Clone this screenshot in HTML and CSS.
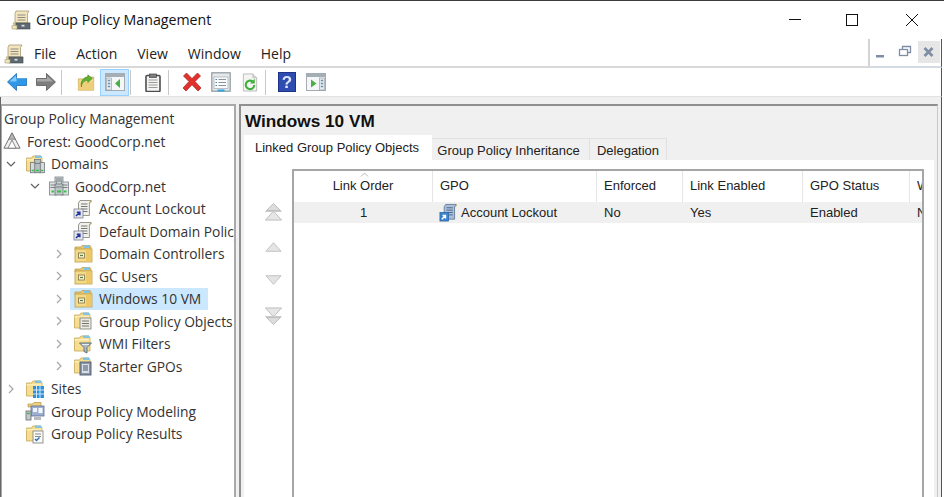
FILE: index.html
```html
<!DOCTYPE html>
<html lang="en">
<head>
<meta charset="utf-8">
<title>Group Policy Management</title>
<link rel="stylesheet" href="styles.css">
</head>
<body>
<svg class="defs" width="0" height="0" aria-hidden="true">
  <defs>
    <symbol id="i-scroll" viewBox="0 0 20 20">
      <path d="M5 1h13l-1.500 2.500V13H4V3.500z" fill="#f3e6bf" stroke="#a69a73" stroke-width=".8"/>
      <path d="M6.500 5h8M6.500 7.500h8M6.500 10h8" stroke="#8d8a80" stroke-width="1"/>
      <path d="M2 13h17l-1 2H3z" fill="#e8d9a8" stroke="#a69a73" stroke-width=".6"/>
      <rect x="5" y="13" width="14" height="6" fill="#5d6870" stroke="#3f474d" stroke-width=".6"/>
      <rect x="10.500" y="14.800" width="3" height="1.800" fill="#d6d9db"/>
      <path d="M1 15.500h5v3.500H1z" fill="#f0e3ba" stroke="#a69a73" stroke-width=".6"/>
    </symbol>
    <symbol id="i-gpo" viewBox="0 0 20 20">
      <path d="M7 1.500h11l-1.600 2.500v12.500H5.500V4z" fill="#f1f1ec" stroke="#8f8f87" stroke-width=".9"/>
      <path d="M8 5h6.500M8 7.500h6.500M8 10h6.500M10 12.500h4.500" stroke="#777" stroke-width="1"/>
      <path d="M18 1l1 1.500-2 2z" fill="#d1a44a"/>
      <rect x="1" y="10" width="9" height="9" fill="#e4e6ec" stroke="#7d818c" stroke-width=".8"/>
      <path d="M3 17l3-3M3.800 13.200h3v3" fill="none" stroke="#23379e" stroke-width="1.600"/>
    </symbol>
    <symbol id="i-gpo-blue" viewBox="0 0 20 20">
      <path d="M7 1.500h11l-1.600 2.500v13H5.500V4z" fill="#a9bfda" stroke="#5d7696" stroke-width=".9"/>
      <path d="M8 5h6.500M8 7.500h6.500M8 10h6.500M10 12.500h4.500" stroke="#4b6585" stroke-width="1"/>
      <path d="M18 1l1 1.500-2 2z" fill="#d1a44a"/>
      <rect x="1" y="10" width="9" height="9" fill="#3c86cf" stroke="#2a62a0" stroke-width=".8"/>
      <path d="M3 17l3-3M3.800 13.200h3v3" fill="none" stroke="#fff" stroke-width="1.500"/>
    </symbol>
    <symbol id="i-ou" viewBox="0 0 20 20">
      <path d="M2 3h6l1-1.500h8l1 1.500v3H2z" fill="#e8c568" stroke="#b99a47" stroke-width=".7"/>
      <rect x="11" y="1.500" width="6" height="2.500" fill="#7fc4e8"/>
      <rect x="2" y="5" width="17" height="13" fill="#f4d987" stroke="#bc9c4a" stroke-width=".8"/>
      <rect x="13" y="5.500" width="5.500" height="12" fill="#ecc869"/>
      <rect x="5.500" y="9" width="6" height="5" fill="#fbf2cf" stroke="#7d7346" stroke-width=".8"/>
      <path d="M7 11.500h3" stroke="#4f7c3f" stroke-width="1.200"/>
    </symbol>
    <symbol id="i-folder" viewBox="0 0 20 20">
      <path d="M1.500 4h5l1.500-2h8l1 2v13h-15.500z" fill="#f6dd90" stroke="#c5a754" stroke-width=".8"/>
      <rect x="10" y="1.500" width="6" height="2.500" fill="#7fc4e8"/>
      <path d="M1.500 5h15v1.500h-15z" fill="#fcedb8"/>
    </symbol>
    <symbol id="i-forest" viewBox="0 0 20 20">
      <path d="M10 1L1 18h18z" fill="#f1f1f1" stroke="#6f6f6f" stroke-width="1.100"/>
      <path d="M10 9l-4.500 9h9z" fill="#fff" stroke="#7a7a7a" stroke-width="1"/>
      <path d="M10 1L6.500 8h7z" fill="#b9b9b9" stroke="#6f6f6f" stroke-width=".8"/>
    </symbol>
    <symbol id="i-servers" viewBox="0 0 20 20">
      <rect x="6" y="1" width="8" height="8" fill="#ccd2d4" stroke="#7d8486" stroke-width=".8"/>
      <rect x=".5" y="6" width="7" height="13" fill="#dde1e2" stroke="#7d8486" stroke-width=".8"/>
      <rect x="12.500" y="6" width="7" height="13" fill="#dde1e2" stroke="#7d8486" stroke-width=".8"/>
      <rect x="6" y="8" width="8" height="11" fill="#bfc6c8" stroke="#6e7577" stroke-width=".8"/>
      <path d="M1.500 9h5M13.500 9h5M7 3h6M7 5h6M1.500 11.500h5M13.500 11.500h5M7 11h6" stroke="#6f7678" stroke-width=".9"/>
      <path d="M8 15.500h4M2.500 15.500h2.500M15 15.500h2.500" stroke="#35c04a" stroke-width="1.800"/>
    </symbol>
    <symbol id="i-domains" viewBox="0 0 20 20">
      <use href="#i-folder"/>
      <g transform="translate(5.500 5.500) scale(.78)">
        <rect x="5" y="0" width="8" height="6" fill="#b7bec0" stroke="#6e7577"/>
        <rect x="0" y="4" width="6" height="13" fill="#d5dadb" stroke="#6e7577"/>
        <rect x="12" y="4" width="6" height="13" fill="#d5dadb" stroke="#6e7577"/>
        <rect x="5.500" y="5" width="7" height="12" fill="#b7bec0" stroke="#6e7577"/>
        <path d="M1.500 14h3M13.500 14h3M7 14h4" stroke="#35c04a" stroke-width="2"/>
      </g>
    </symbol>
    <symbol id="i-gpos" viewBox="0 0 20 20">
      <use href="#i-folder"/>
      <rect x="7" y="7" width="11" height="11" fill="#eceae2" stroke="#8b8a82" stroke-width=".9"/>
      <path d="M9 10h7M9 12.500h7M9 15h7" stroke="#77766e" stroke-width="1"/>
    </symbol>
    <symbol id="i-filter" viewBox="0 0 20 20">
      <use href="#i-folder"/>
      <path d="M6.500 9h12l-4.500 4.500V19l-3-1.500v-4z" fill="#aebac2" stroke="#5f6c75" stroke-width=".9"/>
      <path d="M9 10.500h7" stroke="#e6ecef" stroke-width="1"/>
    </symbol>
    <symbol id="i-starter" viewBox="0 0 20 20">
      <use href="#i-folder"/>
      <rect x="7" y="6" width="11" height="13" fill="#8a98a8" stroke="#4e5866" stroke-width=".9"/>
      <rect x="9" y="8" width="7" height="9" fill="#d8dee5"/>
      <path d="M10 10h5M10 12h5M10 14h5" stroke="#47586e" stroke-width="1"/>
    </symbol>
    <symbol id="i-sites" viewBox="0 0 20 20">
      <use href="#i-folder"/>
      <rect x="8" y="7" width="11" height="12" fill="#2f8fd8"/>
      <path d="M11.500 7v12M15 7v12M8 11h11M8 15h11" stroke="#cfe8fa" stroke-width="1"/>
    </symbol>
    <symbol id="i-modeling" viewBox="0 0 20 20">
      <path d="M3 3h5l1-1.500h7V6H3z" fill="#f0d27c" stroke="#b3953f" stroke-width=".7"/>
      <rect x="6" y="5" width="13" height="10" fill="#9db0d4" stroke="#5d6c92" stroke-width=".8"/>
      <rect x="8" y="7" width="4" height="4" fill="#f0f5fb"/>
      <rect x="13.500" y="7" width="4" height="5" fill="#f4f7fb"/>
      <rect x="1" y="10" width="5" height="9" fill="#c4c9cc" stroke="#65696c" stroke-width=".8"/>
      <path d="M2 12.500h3" stroke="#35c04a" stroke-width="1.500"/>
      <path d="M9 16h7v3H9z" fill="#b8bcbf"/>
    </symbol>
    <symbol id="i-results" viewBox="0 0 20 20">
      <use href="#i-folder"/>
      <rect x="8" y="7" width="10" height="12" fill="#fafafa" stroke="#8a8a8a" stroke-width=".9"/>
      <path d="M10 10h6M10 12.500h6" stroke="#8a8a8a" stroke-width="1"/>
      <path d="M10 15l1.500 1.500 3-3" fill="none" stroke="#2b6fba" stroke-width="1.500"/>
    </symbol>
    <symbol id="i-back" viewBox="0 0 20 18">
      <path d="M9.500 .5L.5 9l9 8.500V12.500h10v-7h-10z" fill="#2f97e8" stroke="#1e6fb5" stroke-width=".8"/>
      <path d="M9 2.500L2.500 8.500h7V6h9.500V5.500H9z" fill="#84c9f8"/>
    </symbol>
    <symbol id="i-fwd" viewBox="0 0 20 18">
      <path d="M10.500 .5l9 8.500-9 8.500V12.500H.5v-7h10z" fill="#7d7d7d" stroke="#5b5b5b" stroke-width=".8"/>
      <path d="M1 6h10V3l6 5.500H1z" fill="#a8a8a8"/>
    </symbol>
    <symbol id="i-up" viewBox="0 0 20 20">
      <path d="M1.500 6h7l1-2h9v14.500h-17z" fill="#f4dc92" stroke="#c0a04c" stroke-width=".8"/>
      <path d="M1.500 9h17v9.500h-17z" fill="#edcf7a"/>
      <path d="M5 15c0-5 3-7 7-7.500V10l5-4.500L12 1.500V4C7 4.500 3.500 8.500 5 15z" fill="#5fb332" stroke="#3a7f1c" stroke-width=".6"/>
    </symbol>
    <symbol id="i-panel-left" viewBox="0 0 20 18">
      <rect x=".5" y=".5" width="19" height="17" fill="#f4f6f7" stroke="#a3acb1"/>
      <rect x=".5" y=".5" width="19" height="3.500" fill="#a3aeb5"/>
      <rect x="1.500" y="5" width="5" height="12" fill="#e6ebee" stroke="#8f9aa1" stroke-width=".6"/>
      <path d="M2.800 7.500h2.400M2.800 10.500h2.400M2.800 13.500h2.400" stroke="#6a94b4" stroke-width="1.300"/>
      <path d="M15 6v9l-5-4.500z" fill="#4ab045"/>
    </symbol>
    <symbol id="i-panel-play" viewBox="0 0 20 18">
      <rect x=".5" y=".5" width="19" height="17" fill="#f4f6f7" stroke="#a3acb1"/>
      <rect x=".5" y=".5" width="19" height="3.500" fill="#a3aeb5"/>
      <rect x="13.500" y="5" width="5" height="12" fill="#e6ebee" stroke="#8f9aa1" stroke-width=".6"/>
      <path d="M14.800 7.500h2.400M14.800 10.500h2.400M14.800 13.500h2.400" stroke="#6a94b4" stroke-width="1.300"/>
      <path d="M5 6.500l5.500 4-5.500 4z" fill="#4ab045"/>
    </symbol>
    <symbol id="i-clip" viewBox="0 0 16 19">
      <rect x="1" y="2.500" width="14" height="16" rx="1" fill="#f4f4f2" stroke="#4e4e4e" stroke-width="1.600"/>
      <rect x="4.500" y="1" width="7" height="3.500" fill="#7f7f7f" stroke="#444" stroke-width=".7"/>
      <path d="M3.500 7h9M3.500 9.500h9M3.500 12h9M3.500 14.500h9" stroke="#9a9a9a" stroke-width="1"/>
    </symbol>
    <symbol id="i-x" viewBox="0 0 20 20">
      <path d="M1.500 4L4.500 1 10 6.500 15.500 1l3 3L13 9.500 19 16l-3 3-6-6.300L4 19l-3-3 6-6.500z" fill="#e2322d" stroke="#a52320" stroke-width=".7"/>
    </symbol>
    <symbol id="i-props" viewBox="0 0 20 20">
      <rect x=".8" y=".8" width="18.400" height="18.400" fill="#e5e8ea" stroke="#8f999e" stroke-width="1.200"/>
      <rect x="3" y="5" width="14" height="11.500" fill="#fafbfb" stroke="#a4acb0" stroke-width=".7"/>
      <path d="M7.500 7.500H15M7.500 10.500H15M7.500 13.500H15" stroke="#8b9398" stroke-width="1"/>
      <path d="M4.500 7.500h1.500M4.500 10.500h1.500M4.500 13.500h1.500" stroke="#4b7fa7" stroke-width="1.200"/>
      <rect x="6.500" y="17.500" width="7" height="2" fill="#2fa5dd"/>
    </symbol>
    <symbol id="i-refresh" viewBox="0 0 16 20">
      <path d="M1 1h10l4 4v14H1z" fill="#f4f5f3" stroke="#b5b5b5" stroke-width=".9"/>
      <path d="M11 1v4h4" fill="#dadada" stroke="#b5b5b5" stroke-width=".8"/>
      <path d="M12.500 12.500a4.500 4.500 0 1 1-1.800-3.600" fill="none" stroke="#3fb03c" stroke-width="2.200"/>
      <path d="M13 6v5h-5z" fill="#3fb03c"/>
    </symbol>
    <symbol id="i-help" viewBox="0 0 18 20">
      <rect x=".5" y=".5" width="17" height="19" fill="#2f4db0" stroke="#1f3488"/>
      <text class="help-mark" x="9" y="16" text-anchor="middle">?</text>
    </symbol>
    <symbol id="i-top" viewBox="0 0 20 20">
      <path d="M10 1l7.500 7.500h-15z" fill="#dcdcdc" stroke="#bcbcbc"/>
      <path d="M10 9l8.500 9.500h-17z" fill="#e6e6e6" stroke="#bcbcbc"/>
      <path d="M1.500 9.500h17" stroke="#c8c8c8"/>
    </symbol>
    <symbol id="i-bottom" viewBox="0 0 20 20">
      <path d="M10 19l7.500-7.500h-15z" fill="#dcdcdc" stroke="#bcbcbc"/>
      <path d="M10 11L18.500 1.500h-17z" fill="#e6e6e6" stroke="#bcbcbc"/>
      <path d="M1.500 10.500h17" stroke="#c8c8c8"/>
    </symbol>
    <symbol id="i-upa" viewBox="0 0 20 12">
      <path d="M10 1.500l8 9H2z" fill="#e4e4e4" stroke="#c0c0c0"/>
    </symbol>
    <symbol id="i-downa" viewBox="0 0 20 12">
      <path d="M10 10.500l8-9H2z" fill="#e4e4e4" stroke="#c0c0c0"/>
    </symbol>
    <symbol id="i-open" viewBox="0 0 10 10"><path d="M1 3l4 4 4-4" fill="none" stroke="#5f5f5f" stroke-width="1.200"/></symbol>
    <symbol id="i-closed" viewBox="0 0 10 10"><path d="M3 1l4 4-4 4" fill="none" stroke="#a6a6a6" stroke-width="1.200"/></symbol>
  </defs>
</svg>

<div class="app">
  <header class="titlebar">
    <svg class="ic20 title-icon"><use href="#i-scroll"/></svg>
    <span class="title-text">Group Policy Management</span>
    <div class="win-controls">
      <svg class="win-btn" viewBox="0 0 58 38"><path d="M23 18.500h12" stroke="#111" stroke-width="1"/></svg>
      <svg class="win-btn" viewBox="0 0 58 38"><rect x="22.500" y="13.500" width="11" height="11" fill="none" stroke="#111"/></svg>
      <svg class="win-btn" viewBox="0 0 58 38"><path d="M24 13l12 12M36 13l-12 12" stroke="#111" stroke-width="1"/></svg>
    </div>
  </header>

  <nav class="menubar">
    <svg class="ic20 menu-icon"><use href="#i-scroll"/></svg>
    <span class="menu-item">File</span>
    <span class="menu-item m-next">Action</span>
    <span class="menu-item m-next">View</span>
    <span class="menu-item m-next">Window</span>
    <span class="menu-item m-next">Help</span>
    <div class="mdi">
      <div class="mdi-btn"><svg width="22" height="22" viewBox="0 0 22 22"><rect x="6" y="14" width="8" height="2.500" fill="#7f8ea3"/></svg></div>
      <div class="mdi-btn"><svg width="22" height="22" viewBox="0 0 22 22"><path d="M8.500 8V5.500h8v6H14" fill="none" stroke="#7f8ea3" stroke-width="1.300"/><rect x="5.500" y="8.500" width="8" height="6" fill="#fff" stroke="#7f8ea3" stroke-width="1.300"/></svg></div>
      <div class="mdi-btn mdi-close"><svg width="22" height="22" viewBox="0 0 22 22"><path d="M6.500 7l8 8M14.500 7l-8 8" stroke="#7f8ea3" stroke-width="2.600"/></svg></div>
    </div>
  </nav>

  <div class="toolbar">
    <div class="tb"><svg class="ic-a"><use href="#i-back"/></svg></div>
    <div class="tb"><svg class="ic-a"><use href="#i-fwd"/></svg></div>
    <div class="sep"></div>
    <div class="tb"><svg class="ic-up"><use href="#i-up"/></svg></div>
    <div class="tb tb-on"><svg class="ic-a"><use href="#i-panel-left"/></svg></div>
    <div class="sep sep-b"></div>
    <div class="tb"><svg class="ic-clip"><use href="#i-clip"/></svg></div>
    <div class="sep sep-c"></div>
    <div class="tb"><svg class="ic20"><use href="#i-x"/></svg></div>
    <div class="tb"><svg class="ic20"><use href="#i-props"/></svg></div>
    <div class="tb"><svg class="ic-clip"><use href="#i-refresh"/></svg></div>
    <div class="sep sep-d"></div>
    <div class="tb"><svg class="ic-help"><use href="#i-help"/></svg></div>
    <div class="tb"><svg class="ic-a"><use href="#i-panel-play"/></svg></div>
  </div>

  <main class="workspace">
    <aside class="tree">
      <div class="row"><span class="root-label">Group Policy Management</span></div>
      <div class="row"><svg class="forest"><use href="#i-forest"/></svg><span class="label">Forest: GoodCorp.net</span></div>
      <div class="row lv1"><svg class="tw"><use href="#i-open"/></svg><svg class="ic20"><use href="#i-domains"/></svg><span class="label">Domains</span></div>
      <div class="row lv2"><svg class="tw"><use href="#i-open"/></svg><svg class="ic20"><use href="#i-servers"/></svg><span class="label">GoodCorp.net</span></div>
      <div class="row lv3"><span class="tw"></span><svg class="ic20"><use href="#i-gpo"/></svg><span class="label">Account Lockout</span></div>
      <div class="row lv3"><span class="tw"></span><svg class="ic20"><use href="#i-gpo"/></svg><span class="label">Default Domain Policy</span></div>
      <div class="row lv3"><svg class="tw"><use href="#i-closed"/></svg><svg class="ic20"><use href="#i-ou"/></svg><span class="label">Domain Controllers</span></div>
      <div class="row lv3"><svg class="tw"><use href="#i-closed"/></svg><svg class="ic20"><use href="#i-ou"/></svg><span class="label">GC Users</span></div>
      <div class="row lv3"><svg class="tw"><use href="#i-closed"/></svg><div class="selected"><svg class="ic20"><use href="#i-ou"/></svg><span class="label">Windows 10 VM</span></div></div>
      <div class="row lv3"><svg class="tw"><use href="#i-closed"/></svg><svg class="ic20"><use href="#i-gpos"/></svg><span class="label">Group Policy Objects</span></div>
      <div class="row lv3"><svg class="tw"><use href="#i-closed"/></svg><svg class="ic20"><use href="#i-filter"/></svg><span class="label">WMI Filters</span></div>
      <div class="row lv3"><svg class="tw"><use href="#i-closed"/></svg><svg class="ic20"><use href="#i-starter"/></svg><span class="label">Starter GPOs</span></div>
      <div class="row lv1"><svg class="tw"><use href="#i-closed"/></svg><svg class="ic20"><use href="#i-sites"/></svg><span class="label">Sites</span></div>
      <div class="row lv1"><span class="tw"></span><svg class="ic20"><use href="#i-modeling"/></svg><span class="label">Group Policy Modeling</span></div>
      <div class="row lv1"><span class="tw"></span><svg class="ic20"><use href="#i-results"/></svg><span class="label">Group Policy Results</span></div>
    </aside>

    <div class="splitter"></div>

    <section class="detail">
      <h1 class="detail-title">Windows 10 VM</h1>
      <div class="tabs">
        <div class="tab tab-on">Linked Group Policy Objects</div>
        <div class="tab tab-2">Group Policy Inheritance</div>
        <div class="tab tab-3">Delegation</div>
      </div>
      <div class="tab-panel">
        <div class="order-col">
          <svg class="ord ord-top"><use href="#i-top"/></svg>
          <svg class="ord-s"><use href="#i-upa"/></svg>
          <svg class="ord-s"><use href="#i-downa"/></svg>
          <svg class="ord"><use href="#i-bottom"/></svg>
        </div>
        <div class="table">
          <div class="thead">
            <div class="th th-center">Link Order<svg class="caret" viewBox="0 0 9 5"><path d="M1 4.500l3.500-3.500 3.500 3.500" fill="none" stroke="#b5b5b5"/></svg></div>
            <div class="th">GPO</div>
            <div class="th">Enforced</div>
            <div class="th">Link Enabled</div>
            <div class="th">GPO Status</div>
            <div class="th">WMI Filter</div>
          </div>
          <div class="tbody-row">
            <div class="td td-center">1</div>
            <div class="td td-gpo"><svg class="ic-row"><use href="#i-gpo-blue"/></svg>Account Lockout</div>
            <div class="td">No</div>
            <div class="td">Yes</div>
            <div class="td">Enabled</div>
            <div class="td">None</div>
          </div>
        </div>
      </div>
    </section>
  </main>
</div>
</body>
</html>
```

FILE: styles.css
```css
* { box-sizing: border-box; }
html, body { margin: 0; height: 100%; overflow: hidden; background: #fff; }
.defs { position: absolute; }

.app {
  width: 944px;
  height: 497px;
  display: flex;
  flex-direction: column;
  border-top: 1px solid #3c3c3c;
  font-family: "Open Sans", sans-serif;
  color: #1e1e1e;
  overflow: hidden;
}

.ic20 { width: 20px; height: 20px; flex: none; display: block; }
.ic-a { width: 20px; height: 18px; display: block; }
.ic-up { width: 18px; height: 19px; display: block; }
.ic-clip { width: 16px; height: 19px; display: block; }
.ic-help { width: 18px; height: 20px; display: block; }
.help-mark { font: bold 17px "Liberation Sans", sans-serif; fill: #dfe6fa; }

.tree svg, .toolbar svg, .menu-icon, .title-icon, .order-col svg, .ic-row { filter: blur(.3px); }

.titlebar {
  height: 38px;
  flex: none;
  display: flex;
  align-items: center;
  padding-left: 11px;
  background: #fff;
}
.title-text { margin: 0 0 2px 5px; font-size: 14.200px; color: #111; }
.win-controls { margin-left: auto; display: flex; margin-right: 4px; }
.win-btn { width: 58px; height: 38px; display: block; }

.menubar {
  height: 29px;
  flex: none;
  display: flex;
  align-items: center;
  padding: 2px 0 0 4px;
  margin-right: 2px;
  border-bottom: 2px solid #d9d9d9;
  border-right: 1px solid #555;
  font-size: 14px;
  background: #fff;
}
.menu-icon { margin-right: 10px; }
.menu-item { color: #222; }
.m-next { margin-left: 20px; }
.mdi {
  margin: -2px 0 -2px auto;
  width: 73px;
  height: 29px;
  padding: 2px 1px 0 0;
  display: flex;
  gap: 2px;
  border-left: 2px solid #d4d4d4;
  border-bottom: 2px solid #d5dbe3;
  align-self: flex-start;
}
.mdi-btn { width: 22px; height: 22px; }
.mdi-close { background: #e6e6e6; }

.toolbar {
  height: 29px;
  flex: none;
  display: flex;
  align-items: center;
  padding-left: 2px;
  margin-right: 2px;
  background: #fff;
  border-bottom: 1px solid #e2e2e2;
  border-right: 1px solid #555;
}
.tb {
  width: 29px;
  height: 27px;
  display: flex;
  align-items: center;
  justify-content: center;
  flex: none;
}
.tb-on { background: #cce8ff; outline: 1px solid #99d1ff; outline-offset: -1px; }
.sep { width: 1px; height: 25px; margin: 0 9px 0 1px; background: #c8c8c8; flex: none; }
.sep-b { margin-right: 7px; }
.sep-c { margin-right: 8px; }
.sep-d { margin-right: 6px; }

.workspace {
  flex: 1;
  min-height: 0;
  display: flex;
  background: #f0f0f0;
  padding: 7px 3px 0 0;
  border-left: 1px solid #666;
  border-right: 1px solid #555;
  margin-right: 2px;
}

.tree {
  width: 235px;
  flex: none;
  background: #fff;
  border: 2px solid #a9a9a9;
  border-width: 2px 2px 0 1px;
  padding-top: 1.500px;
  overflow: hidden;
  font-size: 13.800px;
  color: #333;
}
.row {
  height: 22.500px;
  display: flex;
  align-items: center;
  white-space: nowrap;
}
.root-label { margin-left: 2px; }
.forest { width: 18px; height: 18px; margin-left: 1px; flex: none; display: block; }
.label { margin-left: 6px; }
.lv1 { padding-left: 4px; }
.lv2 { padding-left: 28px; }
.lv3 { padding-left: 52px; }
.tw { width: 10px; height: 10px; margin-right: 9px; flex: none; display: block; }
.selected {
  display: flex;
  align-items: center;
  height: 22.500px;
  width: 138px;
  margin-left: -3px;
  padding-left: 3px;
  background: #cce8ff;
}

.splitter { width: 3px; flex: none; }

.detail {
  flex: 1;
  min-width: 0;
  border-left: 2px solid #8f8f8f;
  border-top: 2px solid #8f8f8f;
  border-right: 1px solid #c8c8c8;
  padding: 0 3px 0 3px;
  display: flex;
  flex-direction: column;
  font-family: "Liberation Sans", sans-serif;
  font-size: 13px;
  color: #222;
}
.detail-title {
  margin: 0;
  height: 29px;
  padding: 2px 0 0 1px;
  line-height: 27px;
  font-size: 17.200px;
  font-weight: 700;
  color: #111;
}
.tabs { height: 25px; flex: none; display: flex; align-items: flex-end; }
.tab {
  height: 22px;
  line-height: 23px;
  border: 1px solid #e0e0e0;
  border-bottom: 0;
  text-align: center;
  flex: none;
}
.tab-on { width: 188px; height: 25px; line-height: 25px; padding-right: 2px; background: #fff; border: 0; }
.tab-2 { width: 158px; border-left: 0; padding-right: 4px; }
.tab-3 { width: 77px; border-left: 0; }

.tab-panel {
  flex: 1;
  min-height: 0;
  background: #fff;
  display: flex;
  padding: 9px 10px 0 0;
}
.order-col {
  width: 48px;
  flex: none;
  padding: 33px 9px 0 20px;
  display: flex;
  flex-direction: column;
  align-items: center;
}
.ord { width: 19px; height: 20px; display: block; flex: none; }
.ord-s { width: 19px; height: 12px; display: block; flex: none; margin-top: 19px; }
.ord-s + .ord { margin-top: 20px; }
.ord-s + .ord-s { margin-top: 21px; }

.table {
  flex: 1;
  min-width: 0;
  border: 2px solid #a6a6a6;
  border-width: 2px 2px 0 2px;
  overflow: hidden;
}
.thead, .tbody-row {
  display: grid;
  grid-template-columns: 139px 164px 86px 120px 107px 60px;
  white-space: nowrap;
}
.thead { height: 31px; align-items: stretch; }
.th {
  position: relative;
  line-height: 30px;
  padding-left: 7px;
  border-right: 1px solid #e5e5e5;
}
.th-center { text-align: center; padding-left: 0; }
.caret { position: absolute; left: 66px; top: 1px; width: 9px; height: 5px; }
.tbody-row { height: 21px; background: #f0f0f0; }
.td { line-height: 21px; padding-left: 7px; }
.td-center { text-align: center; padding-left: 0; }
.td-gpo { display: flex; align-items: center; padding-left: 6px; }
.ic-row { width: 19px; height: 19px; flex: none; margin-right: 3px; }
```
